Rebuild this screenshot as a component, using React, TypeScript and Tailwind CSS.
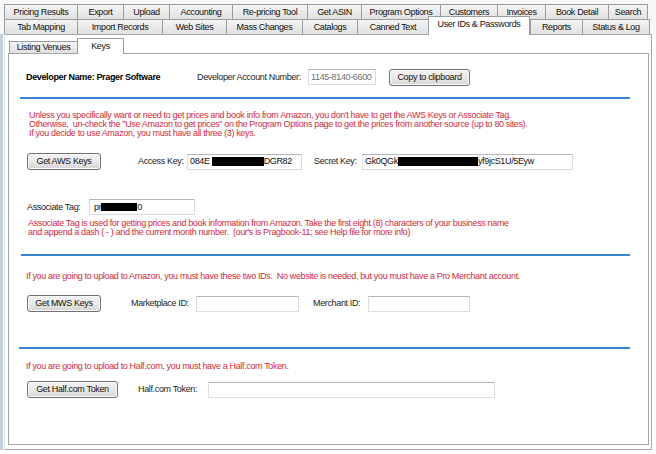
import React from "react";

type TabDef = [string, string];

const row1: TabDef[] = [
  ["Pricing Results", "w-[73px]"],
  ["Export", "w-[46px]"],
  ["Upload", "w-[46px]"],
  ["Accounting", "w-[63px]"],
  ["Re-pricing Tool", "w-[75px]"],
  ["Get ASIN", "w-[54px]"],
  ["Program Options", "w-[79px]"],
  ["Customers", "w-[57px]"],
  ["Invoices", "w-[48px]"],
  ["Book Detail", "w-[63px]"],
  ["Search", "w-[40px]"],
];

const row2: TabDef[] = [
  ["Tab Mapping", "w-[73px]"],
  ["Import Records", "w-[85px]"],
  ["Web Sites", "w-[64px]"],
  ["Mass Changes", "w-[76px]"],
  ["Catalogs", "w-[55px]"],
  ["Canned Text", "w-[71px]"],
  ["User IDs & Passwords", "w-[102px]"],
  ["Reports", "w-[52px]"],
  ["Status & Log", "w-[68px]"],
];

function Tab({ label, w, last }: { label: string; w: string; last?: boolean }) {
  return (
    <div
      className={
        "flex h-[15px] shrink-0 items-center justify-center border-l border-t border-[#9a9ca3] bg-linear-to-b from-[#f4f4f4] to-[#e1e1e1] text-[#111] " +
        (last ? "border-r " : "") +
        w
      }
    >
      {label}
    </div>
  );
}

function SelTab({ label, w }: { label: string; w: string }) {
  return (
    <div
      className={
        "relative z-10 -mb-px flex h-[19px] shrink-0 items-start justify-center border-x border-t border-[#9a9ca3] bg-white pt-[3px] text-[#111] " +
        w
      }
    >
      {label}
    </div>
  );
}

function Btn({ className, children }: { className: string; children: React.ReactNode }) {
  return (
    <div
      className={
        "flex shrink-0 items-center justify-center rounded-[3px] border border-[#707070] bg-linear-to-b from-[#f3f3f3] via-[#e9e9e9] to-[#d4d4d4] text-[#111] shadow-[inset_0_0_0_1px_#fbfbfb] " +
        className
      }
    >
      {children}
    </div>
  );
}

function Box({ className, children }: { className: string; children?: React.ReactNode }) {
  return (
    <div
      className={
        "flex shrink-0 items-center overflow-hidden whitespace-pre border border-[#d9dce2] border-t-[#b4b7bd] bg-white pl-[2px] text-[#111] " +
        className
      }
    >
      {children}
    </div>
  );
}

function Black({ className }: { className: string }) {
  return <span className={"inline-block shrink-0 bg-black " + className} />;
}

function BlueLine({ className }: { className: string }) {
  return <div className={"h-[2px] bg-[#3a86d6] " + className} />;
}

export default function App() {
  return (
    <div className="relative h-[454px] w-[656px] overflow-hidden bg-white font-['Liberation_Sans',Arial,sans-serif] text-[9px] leading-none tracking-[-0.35px] text-[#1c1c1c]">
      {/* top tab strip */}
      <div className="bg-[#f7f7f7] pl-[4px] pt-[4px]">
        <div className="flex h-[15px]">
          {row1.map(([l, w], i) => (
            <Tab key={l} label={l} w={w} last={i === row1.length - 1} />
          ))}
        </div>
        <div className="flex h-[15px] items-end">
          {row2.map(([l, w], i) =>
            i === 6 ? (
              <SelTab key={l} label={l} w={w} />
            ) : (
              <Tab key={l} label={l} w={w} last={i === row2.length - 1} />
            )
          )}
        </div>
      </div>

      {/* outer panel */}
      <div className="flex">
        <div className="h-[416px] w-[3px] bg-[#c4cfdd]" />
        <div className="ml-px h-[416px] w-[648px] border border-[#a4a6ab] border-l-[#e3e3e3] bg-white">
          {/* inner tabs */}
          <div className="mt-[3px] flex h-[15px] items-end pl-[4px]">
            <div className="flex h-[12px] w-[68px] shrink-0 items-center justify-center border-l border-t border-[#9a9ca3] bg-linear-to-b from-[#f4f4f4] to-[#e1e1e1] text-[#111]">
              Listing Venues
            </div>
            <div className="relative z-10 -mb-px flex h-[16px] w-[47px] shrink-0 items-start justify-center border-x border-t border-[#9a9ca3] bg-white pt-[3px] text-[#111]">
              Keys
            </div>
          </div>

          {/* inner panel */}
          <div className="ml-[3px] h-[392px] w-[641px] border border-[#a4a6ab] bg-white">
            {/* developer row */}
            <div className="mt-[15px] flex h-[16px] items-center">
              <div className="ml-[17px] w-[171px] shrink-0 font-bold text-black">Developer Name: Prager Software</div>
              <div className="w-[111px] shrink-0">Developer Account Number:</div>
              <Box className="h-[16px] w-[68px] border-[#cfcfcf] text-[#707070]">1145-8140-6600</Box>
              <Btn className="ml-[13px] h-[17px] w-[81px]">Copy to clipboard</Btn>
            </div>

            <BlueLine className="ml-[11px] mt-[12px] w-[610px]" />

            <div className="ml-[20px] mt-[12px] whitespace-pre leading-[9px] text-[#d22b3b]">
              <div>Unless you specifically want or need to get prices and book info from Amazon, you don't have to get the AWS Keys or Associate Tag.</div>
              <div>Otherwise,  un-check the "Use Amazon to get prices" on the Program Options page to get the prices from another source (up to 80 sites).</div>
              <div>If you decide to use Amazon, you must have all three (3) keys.</div>
            </div>

            {/* AWS row */}
            <div className="mt-[15px] flex h-[17px] items-center">
              <Btn className="ml-[18px] h-[17px] w-[74px]">Get AWS Keys</Btn>
              <div className="ml-[37px] w-[49px] shrink-0">Access Key:</div>
              <Box className="h-[16px] w-[115px]">
                <span>084E</span>
                <Black className="ml-[2px] h-[9px] w-[52px]" />
                <span>DGR82</span>
              </Box>
              <div className="ml-[12px] w-[48px] shrink-0">Secret Key:</div>
              <Box className="h-[16px] w-[211px]">
                <span>Gk0QGk</span>
                <Black className="h-[9px] w-[80px]" />
                <span>yf9jcS1U/5Eyw</span>
              </Box>
            </div>

            {/* Associate row */}
            <div className="mt-[29px] flex h-[16px] items-center">
              <div className="ml-[18px] w-[62px] shrink-0">Associate Tag:</div>
              <Box className="h-[16px] w-[106px] pl-[4px]">
                <span>pr</span>
                <Black className="h-[8px] w-[36px]" />
                <span>0</span>
              </Box>
            </div>

            <div className="ml-[19px] mt-[4px] whitespace-pre leading-[9px] text-[#d22b3b]">
              <div>Associate Tag is used for getting prices and book information from Amazon. Take the first eight (8) characters of your business name</div>
              <div>and append a dash ( - ) and the current month number.  (our's is Pragbook-11; see Help file for more info)</div>
            </div>

            <BlueLine className="ml-[12px] mt-[17px] w-[609px]" />

            <div className="ml-[17px] mt-[16px] whitespace-pre leading-[9px] text-[#d22b3b]">
              If you are going to upload to Amazon, you must have these two IDs.  No website is needed, but you must have a Pro Merchant account.
            </div>

            {/* MWS row */}
            <div className="mt-[14px] flex h-[17px] items-center">
              <Btn className="ml-[18px] h-[17px] w-[74px]">Get MWS Keys</Btn>
              <div className="ml-[30px] w-[65px] shrink-0">Marketplace ID:</div>
              <Box className="h-[16px] w-[103px]" />
              <div className="ml-[14px] w-[55px] shrink-0">Merchant ID:</div>
              <Box className="h-[16px] w-[102px]" />
            </div>

            <BlueLine className="ml-[10px] mt-[35px] w-[611px]" />

            <div className="ml-[17px] mt-[13px] whitespace-pre leading-[9px] text-[#d22b3b]">
              If you are going to upload to Half.com, you must have a Half.com Token.
            </div>

            {/* Half.com row */}
            <div className="mt-[10px] flex h-[17px] items-center">
              <Btn className="ml-[18px] h-[17px] w-[91px]">Get Half.com Token</Btn>
              <div className="ml-[20px] w-[70px] shrink-0">Half.com Token:</div>
              <Box className="h-[16px] w-[287px] border-[#c7dcee] border-t-[#8fb2d0]" />
            </div>
          </div>
        </div>
      </div>
    </div>
  );
}
